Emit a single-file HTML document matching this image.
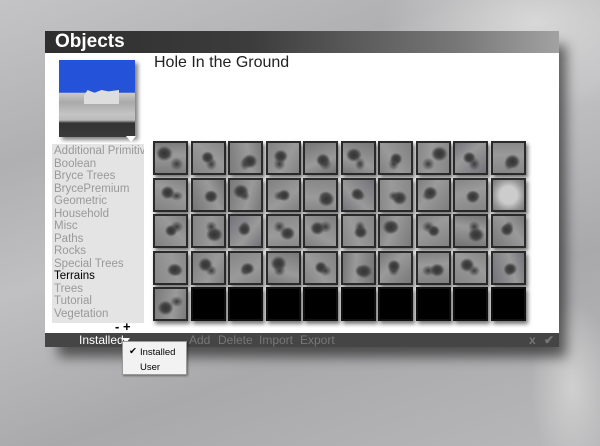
<!DOCTYPE html>
<html><head><meta charset="utf-8"><style>
*{margin:0;padding:0;box-sizing:border-box}
body{width:600px;height:446px;overflow:hidden;position:relative;font-family:"Liberation Sans",Arial,sans-serif;
background:linear-gradient(160deg,#c4c4c6 0%,#b0b0b2 25%,#c0c0c2 45%,#a9a9ab 70%,#b8b8ba 100%)}
.bgx{position:absolute;left:380px;top:0;width:220px;height:110px;background:radial-gradient(ellipse at 70% 20%,rgba(230,230,230,.7),transparent 70%)}
.bgr{position:absolute;left:530px;top:300px;width:70px;height:146px;background:radial-gradient(ellipse at 60% 60%,rgba(215,215,215,.8),transparent 70%)}
.shadow{position:absolute;left:58px;top:45px;width:508px;height:312px;background:rgba(0,0,0,.55);filter:blur(6px)}
.title{position:absolute;left:45px;top:31px;width:514px;height:22px;background:linear-gradient(90deg,#2e2e2e 0%,#3c3c3c 40%,#777 80%,#a2a2a2 100%);color:#fff;font-weight:bold;font-size:19px;padding-left:10px;line-height:22px}
.panel{position:absolute;left:45px;top:53px;width:514px;height:280px;background:#fff}
.bar{position:absolute;left:45px;top:333px;width:514px;height:14px;background:#454545;color:#777;font-size:12px;line-height:14px}
.prev{position:absolute;left:59px;top:60px;width:76px;height:77px;background:linear-gradient(180deg,#2452d8 0%,#2452d8 42%,#c9c9c9 43%,#a9a9a9 55%,#c4c4c4 70%,#bbb 78%,#333 82%,#3a3a3a 100%);box-shadow:3px 3px 4px rgba(0,0,0,.5)}
.prev:after{content:"";position:absolute;left:25px;top:30px;width:35px;height:14px;background:#ddd;clip-path:polygon(0 40%,10% 0,30% 20%,50% 0,70% 10%,100% 0,100% 100%,0 100%)}
.list{position:absolute;left:52px;top:144px;width:92px;height:179px;background:#e4e4e4;overflow:hidden;padding:1px 0 0 2px}
.list div{font-size:11.5px;line-height:12.5px;color:#999;white-space:nowrap}
.list .sel{color:#000}
.name{position:absolute;left:154px;top:54px;font-size:16px;color:#222}
.grid{position:absolute;left:153px;top:141px;width:380px;height:185px}
.c{position:absolute;width:35px;height:34px;border:2px solid #2a2a2a;background:#8a8a8a;box-shadow:2px 3px 4px rgba(0,0,0,.55)}
.k{background:#000;border-color:#111}
.dd{position:absolute;left:122px;top:341px;width:65px;height:34px;background:#f2f2f2;border:1px solid #999;box-shadow:1px 1px 2px rgba(0,0,0,.4);font-size:9.5px;color:#000}
</style></head><body>
<div class="bgx"></div><div class="bgr"></div>
<div class="shadow"></div>
<div class="title">Objects</div>
<div class="panel"></div>
<div class="prev"></div>
<div style="position:absolute;left:126px;top:136px;width:0;height:0;border-left:5px solid transparent;border-right:5px solid transparent;border-top:6px solid #fff"></div>
<div class="name">Hole In the Ground</div>
<div class="list">
<div>Additional Primitives</div><div>Boolean</div><div>Bryce Trees</div><div>BrycePremium</div><div>Geometric</div><div>Household</div><div>Misc</div><div>Paths</div><div>Rocks</div><div>Special Trees</div><div class="sel">Terrains</div><div>Trees</div><div>Tutorial</div><div>Vegetation</div>
</div>
<div style="position:absolute;left:115px;top:319px;font-size:13px;font-weight:bold;color:#000">- +</div>
<div class="grid" id="g"></div>
<div class="bar">
<span style="position:absolute;left:34px;color:#fff;font-size:12px">Installed</span>
<span style="position:absolute;left:77px;top:5px;width:0;height:0;border-left:4px solid transparent;border-right:4px solid transparent;border-top:5px solid #fff"></span>
<span style="position:absolute;left:144px">Add</span>
<span style="position:absolute;left:173px">Delete</span>
<span style="position:absolute;left:214px">Import</span>
<span style="position:absolute;left:255px">Export</span>
<span style="position:absolute;left:484px;font-weight:bold">x</span>
<span style="position:absolute;left:499px;font-weight:bold">✔</span>
</div>
<div class="dd">
<div style="position:absolute;left:6px;top:4px">✔</div>
<div style="position:absolute;left:17px;top:5px">Installed</div>
<div style="position:absolute;left:17px;top:20px">User</div>
</div>
<script>
var g=document.getElementById('g'),h='';
var cols=['#7e7e7e','#858585','#7a7a7a','#828282','#747474','#787878','#808080','#868686','#72727a','#888'];
for(var r=0;r<5;r++)for(var c=0;c<10;c++){
 var x=Math.round(c*37.5),y=Math.round(r*36.6);
 if(r==4&&c>0){h+='<div class="c k" style="left:'+x+'px;top:'+y+'px"></div>';continue;}
 var col=cols[(r*3+c)%10];
 var bg='radial-gradient(ellipse at '+(30+(c*17+r*11)%40)+'% '+(35+(c*13+r*7)%30)+'%,#333 0,#444 15%,transparent 28%),radial-gradient(ellipse at '+(70-(c*11)%40)+'% '+(70-(r*17)%40)+'%,#3a3a3a 0,transparent 22%),linear-gradient('+(c*40+r*25)+'deg,'+col+',#9a9a9a 60%,'+col+')';
 if(r==1&&c==9)bg='radial-gradient(circle,#ccc 40%,#999 70%,#777)';
 h+='<div class="c" style="left:'+x+'px;top:'+y+'px;background:'+bg+'"></div>';
}
g.innerHTML=h;
</script>
</body></html>
